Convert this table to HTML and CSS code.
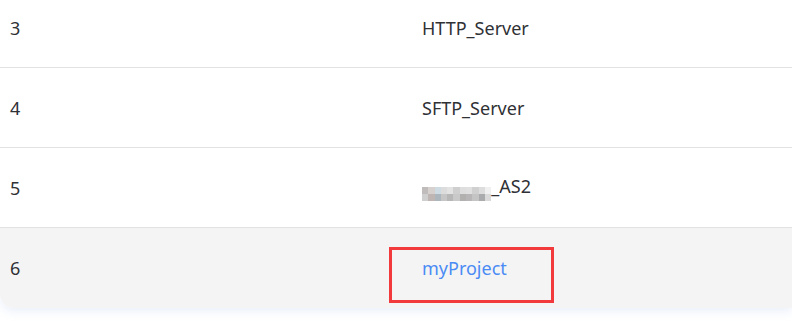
FILE: index.html
```html
<!DOCTYPE html>
<html>
<head>
<meta charset="utf-8">
<link rel="stylesheet" href="styles.css">
</head>
<body>
<div class="card">
  <table class="grid">
    <tr class="row"><td class="c-id">3</td><td class="c-name">HTTP_Server</td></tr>
    <tr class="row"><td class="c-id">4</td><td class="c-name">SFTP_Server</td></tr>
    <tr class="row"><td class="c-id">5</td><td class="c-name"><span class="mosaic"><i></i><i></i><i></i><i></i><i></i><i></i><i></i><i></i><i></i><i></i><i></i><i></i><i></i><i></i><i></i><i></i><i></i><i></i><i></i><i></i><i></i><i></i></span>_AS2</td></tr>
    <tr class="row hover"><td class="c-id">6</td><td class="c-name marked"><a class="link">myProject</a><span class="mark"></span></td></tr>
  </table>
</div>
</body>
</html>
```
FILE: styles.css
```css
html, body {
  margin: 0;
  padding: 0;
  background: #ffffff;
  overflow: hidden;
}
body {
  width: 792px;
  height: 332px;
  font-family: "Noto Sans", "Open Sans", sans-serif;
}
.card {
  margin-top: -12px;
  background: #fff;
  border-radius: 0 0 0 14px;
  box-shadow: 0 4px 10px rgba(150, 180, 230, 0.18);
  overflow: hidden;
}
.grid {
  width: 100%;
  border-collapse: collapse;
}
.row td {
  height: 79px;
  padding: 0;
  border-bottom: 1px solid #e2e2e2;
  font-size: 18px;
  color: #2f3135;
  vertical-align: middle;
}
.row:last-child td {
  border-bottom: none;
  height: 80px;
}
.hover td {
  background: #f4f4f4;
}
.c-id {
  width: 412px;
  padding-left: 10px !important;
}
.c-name {
  padding-left: 0;
}
.marked {
  position: relative;
}
.mosaic {
  display: inline-grid;
  grid-template-columns: repeat(11, 6.3px);
  grid-auto-rows: 7px;
  vertical-align: -1px;
}
.mosaic i:nth-child(1) { background: #c0bcbc; }
.mosaic i:nth-child(2) { background: #d6d0cf; }
.mosaic i:nth-child(3) { background: #cfdbe3; }
.mosaic i:nth-child(4) { background: #dcdcdc; }
.mosaic i:nth-child(5) { background: #e3e3e3; }
.mosaic i:nth-child(6) { background: #cfcfcf; }
.mosaic i:nth-child(7) { background: #dedede; }
.mosaic i:nth-child(8) { background: #e0e0e0; }
.mosaic i:nth-child(9) { background: #d0d0d0; }
.mosaic i:nth-child(10) { background: #dddddd; }
.mosaic i:nth-child(11) { background: #f0f0f0; }
.mosaic i:nth-child(12) { background: #cfcfcf; }
.mosaic i:nth-child(13) { background: #bfb5b2; }
.mosaic i:nth-child(14) { background: #adb6bd; }
.mosaic i:nth-child(15) { background: #c6c6c6; }
.mosaic i:nth-child(16) { background: #b7b7b7; }
.mosaic i:nth-child(17) { background: #c9c9c9; }
.mosaic i:nth-child(18) { background: #b3b0b0; }
.mosaic i:nth-child(19) { background: #b8b6b6; }
.mosaic i:nth-child(20) { background: #c4c4c4; }
.mosaic i:nth-child(21) { background: #a9abad; }
.mosaic i:nth-child(22) { background: #dadada; }
.mark {
  position: absolute;
  left: -33px;
  top: 19px;
  width: 165px;
  height: 56px;
  box-sizing: border-box;
  border: 3px solid #f23a3c;
}
.link {
  color: #4a8bf5;
  cursor: pointer;
}
```
